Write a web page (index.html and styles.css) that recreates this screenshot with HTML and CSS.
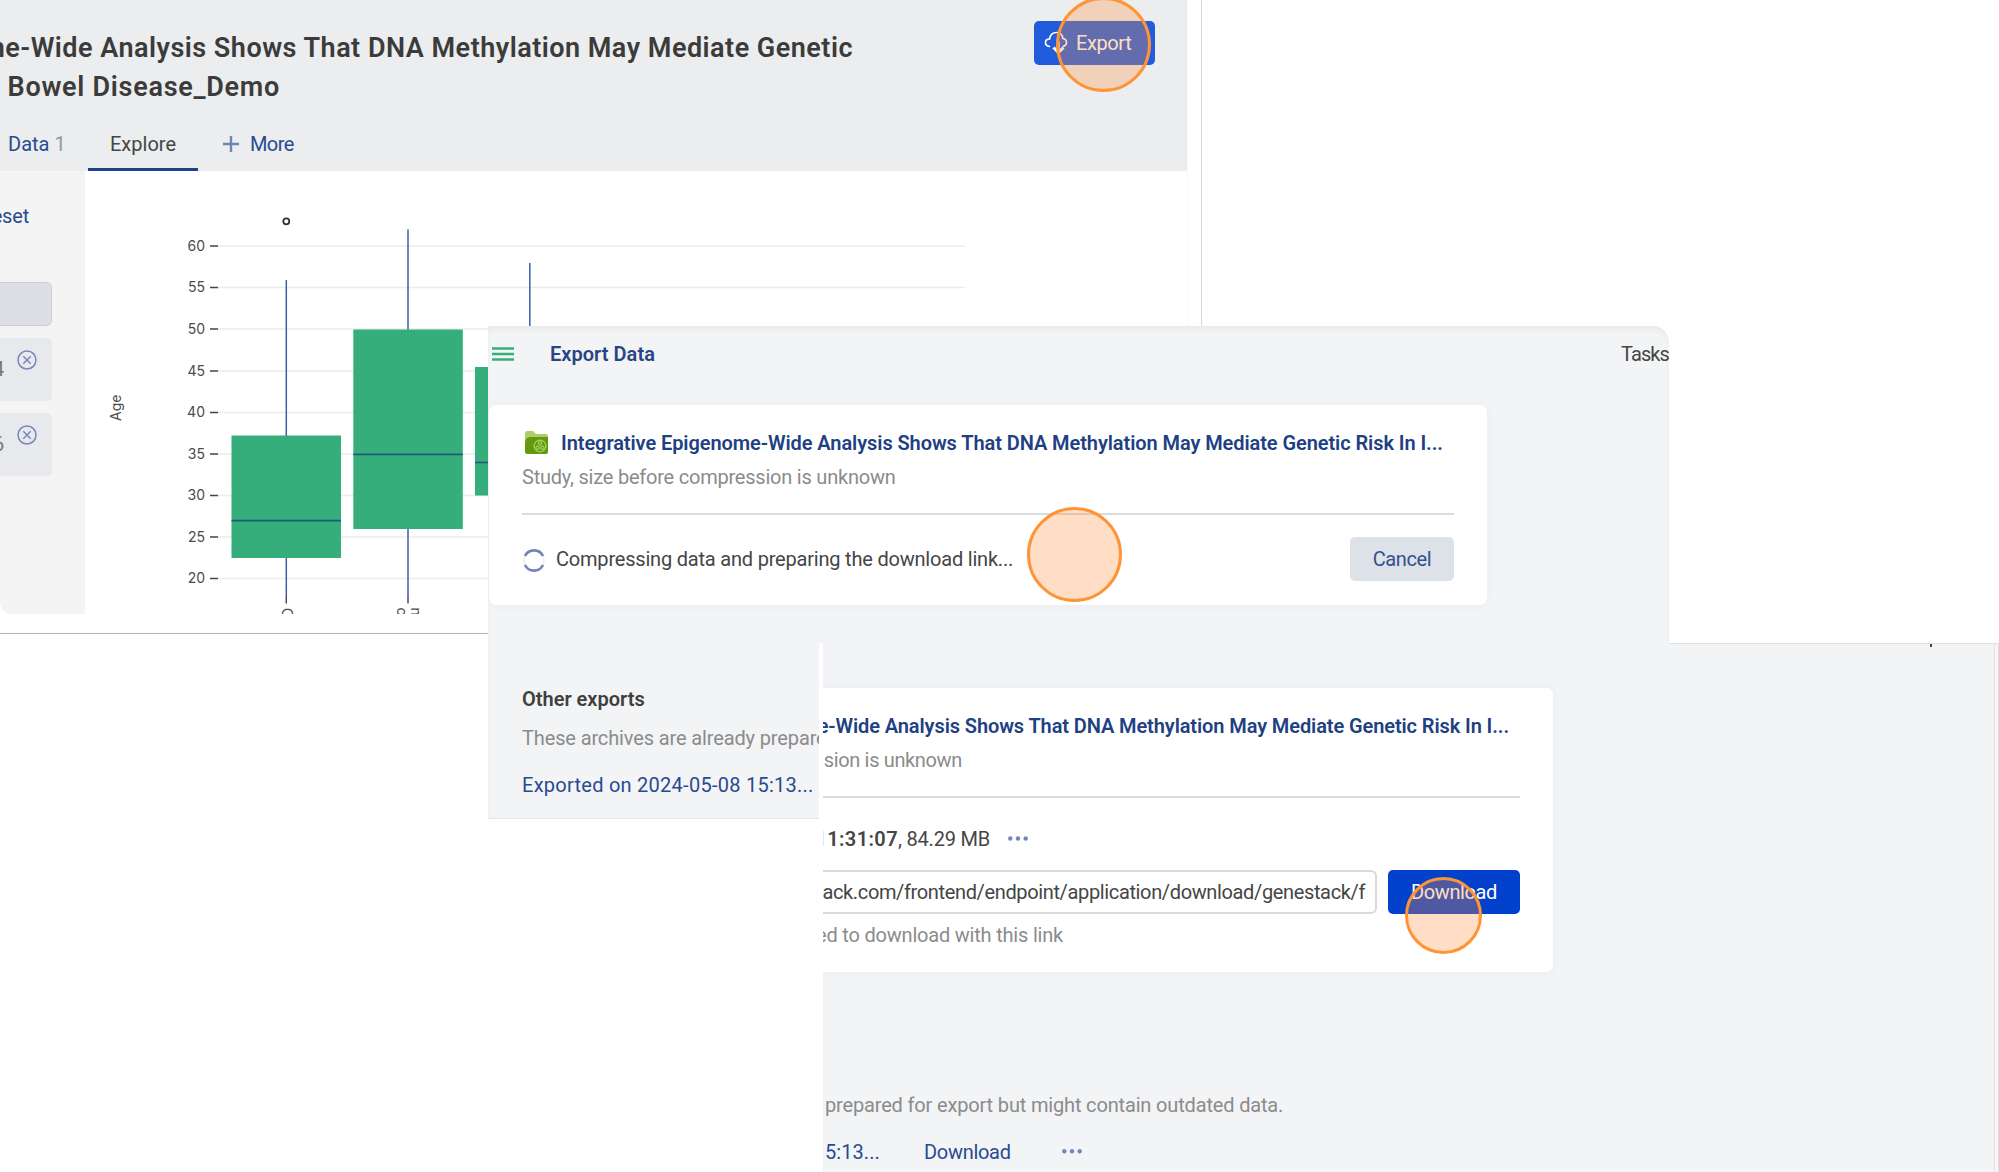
FILE: index.html
```html
<!DOCTYPE html>
<html lang="en">
<head>
<meta charset="utf-8">
<title>Export Data</title>
<link rel="stylesheet" href="styles.css">
</head>
<body>
<main class="canvas">

  <section class="shot shot-study">
    <div class="study">
      <header class="study-header">
        <div class="study-top">
          <h1 class="study-title">
            <span class="clip title-line1">ne-Wide Analysis Shows That DNA Methylation May Mediate Genetic</span>
            <span class="clip title-line2">Bowel Disease_Demo</span>
          </h1>
          <button class="btn btn-export">
            <svg width="24" height="24" viewBox="0 0 24 24" fill="none" stroke="#fff" stroke-width="1.700" stroke-linecap="round" stroke-linejoin="round">
              <path d="M5.500 15.500C3.200 15.200 1.500 13.700 1.500 11.500S3.200 8 5.500 8C6.200 4.200 8.800 1.500 12.300 1.500C16 1.500 18.500 4 18.800 7.500C21.200 7.900 22.500 9.600 22.500 11.600C22.500 13.600 21.200 15 19.300 15.400"/>
              <path d="M14.500 11V20" stroke-width="2.200"/>
              <path d="M9.500 16.500L14.500 21.500L19.500 16.500" stroke-width="3" stroke-linecap="butt"/>
            </svg>
            <span>Export</span>
          </button>
        </div>
        <nav class="tabs">
          <a class="tab tab-data">Data <span class="count">1</span></a>
          <a class="tab tab-active">Explore</a>
          <a class="tab tab-more">
            <svg width="16" height="16" viewBox="0 0 16 16" stroke="#6d86b8" stroke-width="2.400"><path d="M8 0V16M0 8H16"/></svg>
            <span>More</span>
          </a>
        </nav>
      </header>
      <div class="study-body">
        <aside class="filters">
          <span class="clip reset">eset</span>
          <div class="filter-select"></div>
          <div class="filter-chip">
            <span class="clip chip-value">4</span>
            <svg width="20" height="20" viewBox="0 0 20 20" fill="none" stroke="#7787bb" stroke-width="1.500"><circle cx="10" cy="10" r="9"/><path d="M6.300 6.300L13.700 13.700M13.700 6.300L6.300 13.700"/></svg>
          </div>
          <div class="filter-chip">
            <span class="clip chip-value">6</span>
            <svg width="20" height="20" viewBox="0 0 20 20" fill="none" stroke="#7787bb" stroke-width="1.500"><circle cx="10" cy="10" r="9"/><path d="M6.300 6.300L13.700 13.700M13.700 6.300L6.300 13.700"/></svg>
          </div>
        </aside>
        <svg class="chart" width="1103" height="443" viewBox="85 171 1103 443">
          <g stroke="#ececec" stroke-width="1.500">
            <path d="M218 246H965M218 287.500H965M218 329H965M218 371H965M218 412.500H965M218 454H965M218 495.500H965M218 537H965M218 578.500H965"/>
          </g>
          <g stroke="#444" stroke-width="1.600">
            <path d="M210 246H218M210 287.500H218M210 329H218M210 371H218M210 412.500H218M210 454H218M210 495.500H218M210 537H218M210 578.500H218"/>
          </g>
          <g class="axis-labels">
            <text x="205" y="250.500">60</text><text x="205" y="292">55</text><text x="205" y="333.500">50</text>
            <text x="205" y="375.500">45</text><text x="205" y="417">40</text><text x="205" y="458.500">35</text>
            <text x="205" y="500">30</text><text x="205" y="541.500">25</text><text x="205" y="583">20</text>
          </g>
          <text class="axis-title" transform="translate(121.300 421) rotate(-90)">Age</text>
          <path d="M286.300 280V596M408 229.500V596M529.800 263V367" stroke="#3f5fa5" stroke-width="1.500"/>
          <path d="M286.300 596V603.500M408 596V603.500" stroke="#444" stroke-width="1.400"/>
          <g fill="#36ae7c">
            <rect x="231.500" y="435.500" width="109.500" height="122.500"/>
            <rect x="353.300" y="329.500" width="109.500" height="199.500"/>
            <rect x="475" y="367" width="109.500" height="128.500"/>
          </g>
          <path d="M231.500 520.700H341M353.300 454.300H462.800M475 462.500H584.500" stroke="#1f5a78" stroke-width="1.700"/>
          <circle cx="286.300" cy="221.300" r="3" fill="none" stroke="#333" stroke-width="1.800"/>
          <g class="category-labels">
            <text transform="translate(282 608) rotate(90)">C</text>
            <text transform="translate(397 607.500) rotate(90)">c</text>
            <text transform="translate(410.500 607.500) rotate(90)">n</text>
          </g>
        </svg>
      </div>
    </div>
    <div class="marker marker-export"></div>
  </section>

  <section class="shot shot-progress">
    <header class="app-bar">
      <svg width="22" height="18" viewBox="0 0 22 18" stroke="#36ae7c" stroke-width="2.600"><path d="M0 3.500H22M0 9H22M0 14.500H22"/></svg>
      <h2 class="app-title">Export Data</h2>
      <span class="tasks">Tasks</span>
    </header>
    <article class="card card-progress">
      <div class="card-title">
        <svg width="24" height="24" viewBox="0 0 24 24">
          <path d="M1 2.500Q1 0 3.500 0H9L12 3H21.500Q24 3 24 5.500V12H1Z" fill="#abcf68"/>
          <path d="M1 11Q2 6 7 6H24V20.500Q24 23 21.500 23H3.500Q1 23 1 20.500Z" fill="#62990f"/>
          <g fill="none" stroke="#a5d064" stroke-width="1.200"><circle cx="16" cy="15" r="5.900"/><circle cx="16" cy="12.300" r="1.600"/><circle cx="13.600" cy="16.800" r="1.600"/><circle cx="18.400" cy="16.800" r="1.600"/></g>
        </svg>
        <span>Integrative Epigenome-Wide Analysis Shows That DNA Methylation May Mediate Genetic Risk In I...</span>
      </div>
      <p class="muted card-sub">Study, size before compression is unknown</p>
      <hr class="rule">
      <div class="progress-row">
        <svg width="24" height="28" viewBox="0 0 24 28" fill="none"><circle cx="12" cy="15.500" r="10" stroke="#ebeef4" stroke-width="1.500"/><path d="M3 11A10 10 0 0 1 21 11M3 20A10 10 0 0 0 21 20" stroke="#7085b5" stroke-width="2.600"/></svg>
        <span class="progress-text">Compressing data and preparing the download link...</span>
        <button class="btn btn-cancel">Cancel</button>
      </div>
    </article>
    <section class="other-exports">
      <h3 class="other-title">Other exports</h3>
      <p class="muted other-note">These archives are already prepare</p>
      <a class="other-link">Exported on 2024-05-08 15:13...</a>
    </section>
    <div class="marker marker-progress"></div>
  </section>

  <section class="shot shot-ready">
    <article class="card card-ready">
      <div class="clip card-title ready-title">e-Wide Analysis Shows That DNA Methylation May Mediate Genetic Risk In I...</div>
      <p class="clip muted ready-sub">sion is unknown</p>
      <hr class="rule">
      <div class="info-row">
        <span class="clip info"><b>11:31:07</b>, 84.29 MB</span>
        <svg width="20" height="6" viewBox="0 0 20 6" fill="#7089bd"><circle cx="2.300" cy="2.500" r="2.200"/><circle cx="10" cy="2.500" r="2.200"/><circle cx="17.700" cy="2.500" r="2.200"/></svg>
      </div>
      <div class="link-row">
        <div class="clip link-field">ack.com/frontend/endpoint/application/download/genestack/f</div>
        <button class="btn btn-download">Download</button>
      </div>
      <p class="clip muted ready-note">ed to download with this link</p>
    </article>
    <p class="muted archive-note">prepared for export but might contain outdated data.</p>
    <div class="archive-row">
      <span class="clip archive-date">5:13...</span>
      <a class="archive-download">Download</a>
      <svg width="20" height="6" viewBox="0 0 20 6" fill="#7089bd"><circle cx="2.300" cy="2.300" r="2.200"/><circle cx="10" cy="2.300" r="2.200"/><circle cx="17.700" cy="2.300" r="2.200"/></svg>
    </div>
    <div class="marker marker-download"></div>
    <div class="glyph-tail"></div>
  </section>

</main>
</body>
</html>
```
FILE: styles.css
```css
* { box-sizing: border-box; }

body {
  margin: 0;
  background: #fff;
  color: #454545;
  font: 400 20px/24px Roboto, "Liberation Sans", sans-serif;
  letter-spacing: -0.2px;
  white-space: nowrap;
}

h1, h2, h3, p { margin: 0; font-size: inherit; }
svg { display: block; flex: none; }

.canvas {
  position: relative;
  width: 1999px;
  height: 1172px;
  overflow: hidden;
}

/* overlapping windows */
.shot { position: absolute; overflow: hidden; }

/* text that runs out of its box on the left */
.clip {
  display: flex;
  justify-content: flex-end;
  overflow: hidden;
  white-space: pre;
}

.btn {
  display: flex;
  align-items: center;
  justify-content: center;
  height: 44px;
  padding: 0;
  border: 0;
  border-radius: 5px;
  font: inherit;
  letter-spacing: -0.4px;
}

.muted { color: #8b8b8b; }

.marker {
  position: absolute;
  border: 3px solid #ff9436;
  border-radius: 50%;
  background: rgba(255, 145, 62, 0.3);
}

/* study window */
.shot-study {
  left: 0;
  top: 0;
  width: 1202px;
  height: 634px;
  border-right: 1px solid #d6d6d6;
  border-bottom: 1px solid #b4b4b4;
}

.study {
  width: 1188px;
  height: 614px;
  overflow: hidden;
  border-bottom-left-radius: 12px;
  border-right: 1px solid #f7f7f7;
}

.study-header { height: 171px; background: #ebedee; }

.study-top {
  display: flex;
  justify-content: space-between;
  height: 106px;
  padding: 21px 32px 0 0;
}

.study-title {
  padding-top: 8px;
  color: #3b3b3b;
  font-size: 27px;
  font-weight: 600;
  line-height: 39px;
}
.title-line1 { width: 853px; letter-spacing: 0.49px; }
.title-line2 { width: 280px; letter-spacing: 0.72px; }

.btn-export {
  justify-content: flex-start;
  gap: 8px;
  width: 121px;
  padding-left: 10px;
  background: #205cdb;
  color: #fff;
}

.tabs { display: flex; }
.tab { height: 65px; padding-top: 26px; color: #2a4a8f; }
.tab-data { width: 88px; padding-left: 8px; letter-spacing: 0; }
.count { color: #979797; }
.tab-active {
  width: 110px;
  border-bottom: 3px solid #1f4288;
  color: #454545;
  text-align: center;
  letter-spacing: 0;
}
.tab-more { display: flex; gap: 11px; padding-left: 25px; letter-spacing: -0.6px; }
.tab-more svg { margin-top: 4px; }

.study-body { display: flex; height: 443px; }

.filters {
  display: flex;
  flex-direction: column;
  flex: none;
  gap: 12px;
  width: 85px;
  padding-top: 33px;
  background: #f4f4f4;
}
.reset { width: 29px; margin-bottom: 42px; color: #2a4a8f; }
.filter-select {
  width: 52px;
  height: 44px;
  border: 1px solid #cbced3;
  border-left: 0;
  border-radius: 0 6px 6px 0;
  background: #dddfe4;
}
.filter-chip {
  display: flex;
  justify-content: space-between;
  width: 52px;
  height: 63px;
  padding: 12px 15px 0 0;
  border-radius: 0 5px 5px 0;
  background: #e7e9ed;
}
.chip-value { width: 4px; margin-top: 7px; color: #777; }

.chart { background: #fff; }
.chart text { font-family: Inter, sans-serif; fill: #4b4b4b; letter-spacing: 0; }
.axis-labels text { font-size: 14px; text-anchor: end; }
.axis-title { font-size: 14px; }
.category-labels text { font-size: 14px; }

.marker-export { left: 1056px; top: -3px; width: 95px; height: 95px; }

/* progress window */
.shot-progress {
  left: 488px;
  top: 326px;
  width: 1181px;
  height: 493px;
  border-bottom: 1px solid #e6e7e9;
  border-radius: 0 16px 0 0;
  background: #f3f4f6;
  box-shadow: inset 0 5px 8px -3px rgba(0, 0, 0, 0.06);
}

.app-bar {
  display: flex;
  align-items: center;
  height: 79px;
  padding: 0 0 23px 4px;
}
.app-title {
  margin-left: 36px;
  color: #274585;
  font-weight: 600;
  letter-spacing: 0.03px;
}
.tasks { width: 48px; margin-left: auto; letter-spacing: -0.9px; }

.card {
  background: #fff;
  box-shadow: 0 0 10px rgba(30, 50, 90, 0.05);
}
.card-progress {
  width: 998px;
  height: 200px;
  margin-left: 1px;
  padding: 26px 33px 0;
  border-radius: 7px;
}
.card-title {
  display: flex;
  gap: 13px;
  color: #213f83;
  font-weight: 600;
  letter-spacing: -0.08px;
}
.card-progress .card-title { padding-left: 2px; }
.card-sub { margin-top: 10px; letter-spacing: -0.22px; }
.rule { margin: 24px 0 0; border: 0; border-top: 2px solid #dadbdd; }

.progress-row {
  display: flex;
  align-items: center;
  gap: 10px;
  margin-top: 22px;
}
.btn-cancel {
  width: 104px;
  margin-left: auto;
  background: #dde1e8;
  color: #33508f;
}

.other-exports { padding: 82px 0 0 34px; width: 331px; }
.other-title { color: #3f3f3f; font-weight: 600; letter-spacing: 0; }
.other-note { margin-top: 15px; overflow: hidden; letter-spacing: -0.13px; }
.other-link { display: block; margin-top: 23px; color: #2a4a8f; letter-spacing: 0.26px; }

.marker-progress { left: 538.5px; top: 180.5px; width: 95px; height: 95px; }

/* finished export window */
.shot-ready {
  left: 819px;
  top: 643px;
  width: 1180px;
  height: 529px;
  padding-top: 45px;
  border-left: 4px solid #fff;
  background: #f3f4f6;
  box-shadow: inset -1px 0 #dcdddf, inset -4px 0 #f7f7f8, inset -5px 0 #dfe0e2;
}
.shot-ready::before {
  content: "";
  position: absolute;
  left: 846px;
  right: 0;
  top: 0;
  border-top: 1px solid #dfe0e2;
}

.card-ready {
  width: 730px;
  height: 284px;
  padding: 26px 33px 0 0;
  border-radius: 0 7px 7px 0;
}
.ready-title { width: 686px; letter-spacing: -0.1px; }
.ready-sub { width: 139px; margin-top: 10px; letter-spacing: -0.35px; }
.card-ready .rule { margin-top: 24px; }

.info-row { display: flex; align-items: center; gap: 18px; margin-top: 29px; }
.info { width: 167px; }
.info b { font-weight: 600; letter-spacing: 0.4px; }

.link-row { display: flex; gap: 11px; margin-top: 19px; }
.link-field {
  width: 554px;
  height: 44px;
  padding: 8px 10px 0 0;
  border: 2px solid #dadada;
  border-left: 0;
  border-radius: 0 6px 6px 0;
  letter-spacing: -0.36px;
}
.btn-download { width: 132px; background: #0241cc; color: #fff; }
.ready-note { width: 240px; margin-top: 9px; }

.archive-note { margin: 121px 0 0 2px; letter-spacing: -0.16px; }
.archive-row { display: flex; align-items: center; margin-top: 23px; color: #2a4a8f; }
.archive-date { width: 57px; letter-spacing: 0.1px; }
.archive-download { width: 138px; margin-left: 44px; letter-spacing: -0.3px; }

.marker-download { left: 582px; top: 234px; width: 77px; height: 77px; }

.glyph-tail {
  position: absolute;
  left: 1107px;
  top: 1px;
  width: 2px;
  height: 3px;
  background: #444;
}
```
